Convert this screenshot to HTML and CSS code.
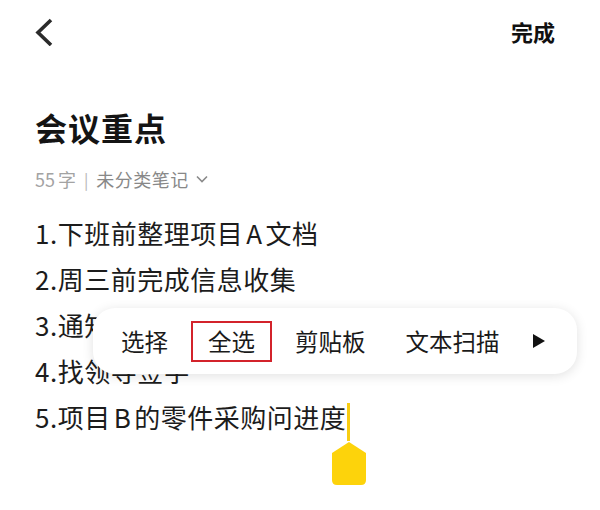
FILE: index.html
```html
<!DOCTYPE html>
<html lang="zh-CN">
<head>
    <meta charset="UTF-8">
    <meta name="viewport" content="width=device-width, initial-scale=1.0">
    <title>会议重点</title>
    <link rel="stylesheet" href="styles.css">
</head>
<body>

    <div class="topbar">
        <svg class="back" width="24" height="32" viewBox="0 0 24 32">
            <path d="M17 6 L4 18.5 L17 31" fill="none" stroke="#2b2b2b" stroke-width="3.6"/>
        </svg>
        <span class="done">完成</span>
    </div>

    <div class="note">
        <h1 class="title">会议重点</h1>
        <div class="meta">
            <span class="count">55</span><span class="unit">字</span>
            <span class="sep">|</span>
            <span class="folder">未分类笔记</span>
            <svg class="caret" width="12" height="8" viewBox="0 0 12 8">
                <path d="M1 1.5 L6 6.5 L11 1.5" fill="none" stroke="#8a8a8a" stroke-width="1.6"/>
            </svg>
        </div>

        <div class="content">
            <p>1.下班前整理项目<span class="latin">A</span>文档</p>
            <p>2.周三前完成信息收集</p>
            <p>3.通知全员下周例会</p>
            <p>4.找领导签字</p>
            <p>5.项目<span class="latin">B</span>的零件采购问进度<span class="cursor"><svg class="handle" width="34" height="43" viewBox="0 0 34 43"><path d="M17 0 L34 11 L34 38 Q34 43 29 43 L5 43 Q0 43 0 38 L0 11 Z" fill="#fdd30b"/></svg></span></p>
        </div>

        <!-- text selection toolbar -->
        <div class="toolbar">
            <span class="tool">选择</span>
            <span class="tool active">全选</span>
            <span class="tool">剪贴板</span>
            <span class="tool">文本扫描</span>
            <svg class="more" width="14" height="16" viewBox="0 0 14 16">
                <path d="M1 1 L13 8 L1 15 Z" fill="#111"/>
            </svg>
        </div>
    </div>

</body>
</html>
```

FILE: styles.css
```css
body {
    margin: 0;
    min-height: 510px;
    background-color: #fff;
    font-family: "Noto Sans CJK SC", "Noto Sans", sans-serif;
    color: #1a1a1a;
}
.topbar {
    height: 64px;
    display: flex;
    justify-content: space-between;
    align-items: center;
    padding: 0 45px 0 34px;
}
.back {
    display: block;
    margin-top: -4px;
}
.done {
    font-size: 22px;
    font-weight: bold;
    color: #111;
    line-height: 30px;
    margin-top: -3px;
}
.note {
    position: relative;
    padding: 41px 35px 0;
}
.title {
    margin: 0;
    font-size: 32px;
    line-height: 44px;
    font-weight: bold;
    color: #141414;
    letter-spacing: 1px;
}
.meta {
    margin-top: 18px;
    height: 24px;
    display: flex;
    align-items: center;
    font-size: 18px;
    color: #a3a3a3;
}
.meta .unit {
    margin-left: 3px;
}
.meta .sep {
    margin: 0 8px;
    color: #b5b5b5;
    font-size: 16px;
}
.meta .folder {
    color: #888;
    letter-spacing: 0.5px;
}
.meta .caret {
    margin-left: 7px;
}
.content {
    margin-top: 19px;
}
.content p {
    margin: 0;
    font-size: 26px;
    line-height: 46px;
    letter-spacing: 0.5px;
    color: #1c1c1c;
}
.content .latin {
    margin: 0 3px;
}
.cursor {
    position: relative;
    display: inline-block;
    width: 3px;
    height: 38px;
    margin-left: 1px;
    background-color: #f8cd12;
    vertical-align: -13px;
}
.handle {
    position: absolute;
    left: -15px;
    top: 39px;
    display: block;
}
.toolbar {
    position: absolute;
    top: 244px;
    left: 93px;
    width: 484px;
    height: 66px;
    box-sizing: border-box;
    padding-left: 11px;
    display: flex;
    align-items: center;
    gap: 6px;
    background-color: #fff;
    border-radius: 22px;
    box-shadow: 0 2px 12px rgba(0, 0, 0, 0.12);
}
.tool {
    padding: 0 17px;
    height: 41px;
    box-sizing: border-box;
    display: flex;
    align-items: center;
    font-size: 23.5px;
    color: #1a1a1a;
}
.tool.active {
    border: 2px solid #d3232b;
    padding: 0 15px;
}
.more {
    margin-left: 9px;
}
```
